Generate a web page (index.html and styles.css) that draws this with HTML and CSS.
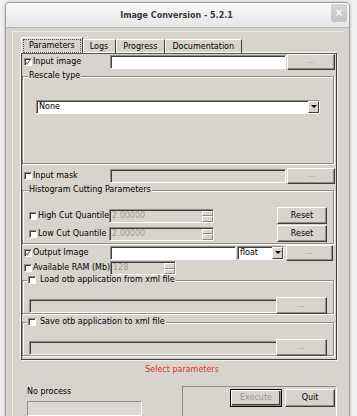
FILE: index.html
```html
<!DOCTYPE html>
<html lang="en">
<head>
    <meta charset="UTF-8">
    <title>Image Conversion - 5.2.1</title>
    <link rel="stylesheet" href="styles.css">
</head>
<body>
    <div class="window">
        <!-- Title bar -->
        <div class="titlebar">
            <span class="tb-spacer"></span>
            <span class="title">Image Conversion - 5.2.1</span>
            <span class="close">&#215;</span>
        </div>

        <div class="client">
            <div class="central">
                <!-- Tabs -->
                <div class="tabs">
                    <span class="tab active"><span class="focus">Parameters</span></span>
                    <span class="tab">Logs</span>
                    <span class="tab">Progress</span>
                    <span class="tab">Documentation</span>
                </div>

                <div class="pane">
                    <div class="row row-main">
                        <label class="check"><span class="cb on"><svg width="6" height="6" viewBox="0 0 6 6"><polyline points="0.5,3 2.2,4.8 5.5,0.5" /></svg></span>Input image</label>
                        <span class="field"></span>
                        <span class="btn dots">...</span>
                    </div>

                    <div class="group g-rescale">
                        <span class="group-title">Rescale type</span>
                        <div class="combo combo-wide"><span class="combo-text">None</span><span class="combo-arrow"></span></div>
                    </div>

                    <div class="row row-main row-mask">
                        <label class="check"><span class="cb"></span>Input mask</label>
                        <span class="field off"></span>
                        <span class="btn dots">...</span>
                    </div>

                    <div class="group g-hist">
                        <span class="group-title">Histogram Cutting Parameters</span>
                        <div class="hist-row first">
                            <label class="check"><span class="cb"></span>High Cut Quantile</label>
                            <span class="spin off"><span class="spin-text">2.00000</span><span class="spin-btns"><i></i><i></i></span></span>
                            <span class="btn reset">Reset</span>
                        </div>
                        <div class="hist-row">
                            <label class="check"><span class="cb"></span>Low Cut Quantile</label>
                            <span class="spin off"><span class="spin-text">2.00000</span><span class="spin-btns"><i></i><i></i></span></span>
                            <span class="btn reset">Reset</span>
                        </div>
                    </div>

                    <div class="row row-out">
                        <label class="check"><span class="cb on"><svg width="6" height="6" viewBox="0 0 6 6"><polyline points="0.5,3 2.2,4.8 5.5,0.5" /></svg></span>Output Image</label>
                        <span class="field"></span>
                        <div class="combo combo-small"><span class="combo-text">float</span><span class="combo-arrow"></span></div>
                        <span class="btn dots">...</span>
                    </div>

                    <div class="row row-ram">
                        <label class="check"><span class="cb"></span>Available RAM (Mb)</label>
                        <span class="spin spin-ram off"><span class="spin-text">128</span><span class="spin-btns"><i></i><i></i></span></span>
                    </div>

                    <div class="group g-xml g-load">
                        <span class="group-title"><span class="cb"></span>Load otb application from xml file</span>
                        <div class="xml-row">
                            <span class="field off"></span>
                            <span class="btn dots wide">...</span>
                        </div>
                    </div>

                    <div class="group g-xml g-save">
                        <span class="group-title"><span class="cb"></span>Save otb application to xml file</span>
                        <div class="xml-row">
                            <span class="field off"></span>
                            <span class="btn dots wide">...</span>
                        </div>
                    </div>
                </div>

                <div class="status">Select parameters</div>

                <div class="bottom">
                    <div class="progress-box">
                        <div class="progress-label">No process</div>
                        <div class="progress-bar"></div>
                    </div>
                    <div class="actions">
                        <span class="btn default disabled">Execute</span>
                        <span class="btn quit">Quit</span>
                    </div>
                </div>
            </div>
        </div>
    </div>
</body>
</html>
```

FILE: styles.css
```css
/* Qt "Windows" style dialog */
:root {
    --bg: #d7d4ce;
    --light: #ffffff;
    --mid: #8f8b85;
    --dark: #3e3e3e;
    --disabled: #9d9a94;
}

* { margin: 0; padding: 0; box-sizing: border-box; }
body {
    background: #f0f0f0; color: #000; overflow: hidden;
    font-family: "DejaVu Sans", sans-serif; font-size: 8px; line-height: 10px;
}

/* Window frame */
.window {
    margin: 2px 0 0 5px; width: 345px; height: 420px;
    background: var(--bg); border: 1px solid #a2a2a2;
    border-radius: 5px 5px 0 0; box-shadow: 0 0 3px rgba(0,0,0,0.3);
}
.titlebar {
    height: 25px; display: flex; align-items: center; padding-right: 2px;
    background: linear-gradient(#f8f8f8, #e6e6e6);
    border-bottom: 1px solid #b6b6b6; border-radius: 4px 4px 0 0;
}
.tb-spacer { width: 16px; }
.title { flex: 1; text-align: center; font-weight: bold; font-size: 8px; color: #3a3a3a; padding-top: 1px; }
.close {
    width: 16px; height: 18px; margin-top: -4px; border-radius: 0 3px 3px 3px;
    background: linear-gradient(#d6d6d6, #c4c4c4); color: #fff;
    font-weight: bold; font-size: 10px; line-height: 18px; text-align: center;
}

.client { padding: 3px 5px 0 6px; }
.central {
    height: 400px; padding: 5px 0 0 9px;
    border-top: 1px solid #eeebe6; border-left: 1px solid #eeebe6;
}

/* Tabs */
.tabs { display: flex; height: 16px; align-items: flex-end; }
.tab {
    height: 14px; padding: 1px 7px 0 6px; line-height: 12px;
    border-top: 1px solid var(--light); border-left: 1px solid var(--light);
    border-right: 1px solid var(--dark);
}
.tab.active { height: 16px; padding: 1px 1px 0; margin-left: -1px; }
.focus { display: block; padding: 1px 5px 1px; border: 1px dotted #555; line-height: 10px; }

.pane {
    margin-left: -1px; width: 316px; height: 307px;
    border: 1px solid var(--dark); border-top-color: #555;
    box-shadow: -1px -1px 0 var(--light), 1px 1px 0 #f4f2ee;
}

/* Common widgets */
.check { display: flex; align-items: center; white-space: nowrap; min-width: 0; }
.cb {
    width: 8px; height: 8px; margin-right: 1px; flex: none; background: #fff;
    border: 1px solid; border-color: var(--mid) var(--light) var(--light) var(--mid);
    box-shadow: inset 1px 1px 0 var(--dark);
    display: inline-flex; align-items: center; justify-content: center;
}
.cb svg { fill: none; stroke: #777; stroke-width: 1.2; }

.field {
    height: 14px; background: #fff;
    border: 1px solid; border-color: var(--mid) var(--light) var(--light) var(--mid);
    box-shadow: inset 1px 1px 0 var(--dark);
}
.field.off { background: var(--bg); }

.btn {
    height: 16px; display: flex; align-items: center; justify-content: center;
    background: var(--bg);
    border: 1px solid; border-color: var(--light) var(--dark) var(--dark) var(--light);
    box-shadow: inset -1px -1px 0 var(--mid);
}
.dots { color: #7d7a75; font-size: 7px; letter-spacing: 0.5px; padding-bottom: 2px; }

.combo {
    height: 14px; display: flex; align-items: center; background: #fff;
    border: 1px solid; border-color: var(--mid) var(--light) var(--light) var(--mid);
    box-shadow: inset 1px 1px 0 var(--dark);
}
.combo-text { flex: 1; padding-left: 2px; }
.combo-arrow {
    width: 11px; height: 12px; background: var(--bg); position: relative;
    border: 1px solid; border-color: var(--light) var(--dark) var(--dark) var(--light);
}
.combo-arrow::after {
    content: ""; position: absolute; left: 2px; top: 3px;
    border-left: 3px solid transparent; border-right: 3px solid transparent;
    border-top: 3px solid #000;
}

.spin {
    height: 14px; display: flex;
    border: 1px solid; border-color: var(--mid) var(--light) var(--light) var(--mid);
    box-shadow: inset 1px 1px 0 var(--dark);
}
.spin.off { background: var(--bg); color: var(--disabled); }
.spin-text { flex: 1; padding: 1px 0 0 2px; }
.spin-btns { width: 11px; display: flex; flex-direction: column; padding: 1px 0 0; }
.spin-btns i {
    flex: 1; border: 1px solid; border-color: var(--light) var(--mid) var(--mid) var(--light);
}

/* Pane rows */
.row { display: grid; align-items: center; height: 16px; }
.row-main { grid-template-columns: 87px 176px 48px; column-gap: 1px; }
.row .check { padding-left: 2px; }
.row-mask { margin-top: 4px; }
.row-out { grid-template-columns: 87px 126px 47px 48px; column-gap: 1px; margin-top: 1px; }
.row-out .btn { margin-left: 1px; }
.row-ram { grid-template-columns: 88px 66px; height: 14px; }

/* Group boxes */
.group {
    width: 312px;
    border: 1px solid var(--mid);
    box-shadow: inset 1px 1px 0 var(--light), 1px 1px 0 var(--light);
}
.group-title {
    display: inline-flex; align-items: center; margin: -6px 0 0 5px; padding: 0 1px;
    background: var(--bg); line-height: 10px; vertical-align: top;
}
.g-rescale { margin-top: 6px; height: 88px; }
.combo-wide { margin: 13px 13px 0; }

.g-hist { margin-top: 6px; height: 54px; }
.hist-row {
    display: grid; grid-template-columns: 80px 105px 1fr 50px;
    align-items: center; height: 17px; margin-top: 1px; padding: 0 6px;
}
.hist-row.first { margin-top: 6px; }
.hist-row .check { overflow: visible; }
.hist-row .spin { grid-column: 2; }
.reset { grid-column: 4; height: 17px; }

.g-xml { height: 34px; }
.g-load { margin-top: 5px; }
.g-save { margin-top: 8px; }
.g-xml .group-title .cb { margin-right: 4px; }
.g-xml .group-title { margin-left: 4px; }
.xml-row {
    display: grid; grid-template-columns: 248px 50px;
    align-items: center; height: 17px; margin-top: 6px; padding-left: 6px;
}
.btn.wide { height: 17px; margin-left: -1px; }

/* Status and bottom bar */
.status { margin-top: 5px; text-align: center; color: #e8302c; padding-right: 2px; }
.bottom { display: flex; margin-top: 11px; }
.progress-box { margin-left: 5px; width: 115px; }
.progress-label { margin-top: 1px; }
.progress-bar {
    height: 15px; margin-top: 4px; background: #dcd9d4;
    border: 1px solid; border-color: var(--mid) var(--light) var(--light) var(--mid);
}
.actions {
    margin-left: auto; margin-right: 7px; width: 155px; height: 40px;
    display: flex; justify-content: flex-end; gap: 3px; padding: 2px 1px 0 0;
    border: 1px solid; border-color: var(--mid) var(--light) var(--light) var(--mid);
}
.actions .btn { height: 18px; }
.default {
    width: 52px; border: 1px solid #000;
    box-shadow: inset 1px 1px 0 var(--light), inset -1px -1px 0 var(--mid), inset -2px -2px 0 var(--dark);
}
.disabled { color: var(--disabled); }
.quit { width: 50px; }
```
